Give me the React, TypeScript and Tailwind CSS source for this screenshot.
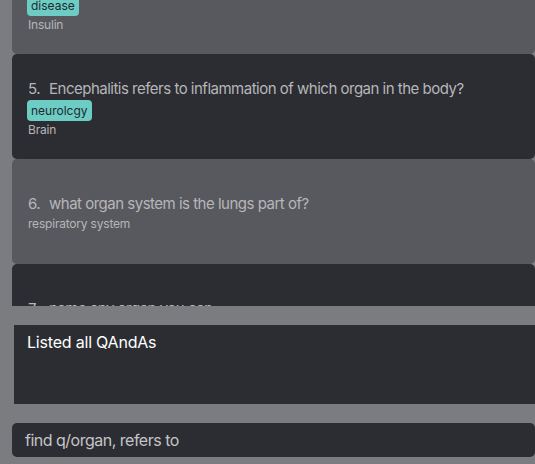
const cards = [
    {
        id: 4,
        question: "Type 1 diabetes is treated by injecting which hormone?",
        tag: "disease",
        answer: "Insulin",
        tone: "light",
    },
    {
        id: 5,
        question: "Encephalitis refers to inflammation of which organ in the body?",
        tag: "neurolcgy",
        answer: "Brain",
        tone: "dark",
    },
    {
        id: 6,
        question: "what organ system is the lungs part of?",
        tag: null,
        answer: "respiratory system",
        tone: "light",
    },
    {
        id: 7,
        question: "name any organ you can",
        tag: null,
        answer: "heart",
        tone: "dark",
    },
];

function QACard({ card }: { card: (typeof cards)[number] }) {
    return (
        <div
            className={`h-[105px] rounded-[5px] flex flex-col justify-center pl-[16px] pt-[2px] ${
                card.tone === "dark" ? "bg-[#2c2d32]" : "bg-[#58595e]"
            }`}
        >
            {/* Question */}
            <div className="flex text-[15px] leading-[22px] text-[#b6b6b9] tracking-[-0.5px]">
                <span className="w-[21px] shrink-0">{card.id}.</span>
                <span className="whitespace-nowrap">{card.question}</span>
            </div>
            {card.tag && (
                <div className="flex">
                    <span className="bg-[#6dcdc4] text-[#1d2a31] text-[12px] leading-[21px] px-[4px] rounded-[4px] -ml-[1px]">
                        {card.tag}
                    </span>
                </div>
            )}
            <div className="text-[12px] leading-[17px] text-[#b6b6b9] tracking-[-0.2px]">
                {card.answer}
            </div>
        </div>
    );
}

export default function App() {
    return (
        <div
            className="h-[464px] w-[535px] bg-[#7b7c80] flex flex-col overflow-hidden"
            style={{ fontFamily: "Inter, 'Noto Sans', sans-serif" }}
        >
            {/* QAndA list */}
            <div className="h-[306px] shrink-0 overflow-hidden pl-[12px]">
                <div className="-mt-[51px] flex flex-col">
                    {cards.map((card) => (
                        <QACard key={card.id} card={card} />
                    ))}
                </div>
            </div>

            {/* Result display */}
            <div className="mt-[19px] ml-[14px] h-[79px] shrink-0 bg-[#2c2d32] px-[13px] pt-[7px] text-white text-[16px] leading-[20px] tracking-[-0.2px]">
                Listed all QAndAs
            </div>

            {/* Command box */}
            <div className="mt-[19px] ml-[12px] h-[34px] shrink-0 rounded-[5px] bg-[#2c2d32] flex items-center px-[13px] text-[16px] text-[#c4c4c7] tracking-[-0.5px]">
                find q/organ, refers to
            </div>
        </div>
    );
}
